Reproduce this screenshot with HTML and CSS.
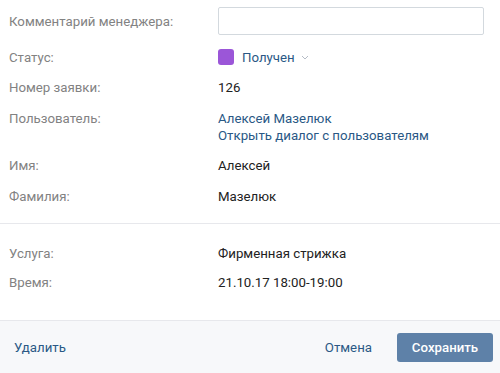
FILE: index.html
```html
<!DOCTYPE html>
<html lang="ru">
<head>
    <meta charset="UTF-8">
    <meta name="viewport" content="width=device-width, initial-scale=1.0">
    <title>Заявка</title>
    <link rel="stylesheet" href="styles.css">
</head>
<body>
    <!-- основные данные заявки -->
    <div class="section section-main">
        <div class="row row-input">
            <div class="label">Комментарий менеджера:</div>
            <div class="value"><input type="text" class="comment"></div>
        </div>
        <div class="row">
            <div class="label">Статус:</div>
            <div class="value status">
                <span class="status-color"></span>
                <span class="link">Получен</span>
                <svg class="caret" width="8" height="5" viewBox="0 0 8 5"><path d="M1 1l3 3 3-3" fill="none" stroke="#b5bcc6" stroke-width="1"/></svg>
            </div>
        </div>
        <div class="row">
            <div class="label">Номер заявки:</div>
            <div class="value">126</div>
        </div>
        <div class="row">
            <div class="label">Пользователь:</div>
            <div class="value">
                <div class="link">Алексей Мазелюк</div>
                <div class="link">Открыть диалог с пользователям</div>
            </div>
        </div>
        <div class="row">
            <div class="label">Имя:</div>
            <div class="value">Алексей</div>
        </div>
        <div class="row">
            <div class="label">Фамилия:</div>
            <div class="value">Мазелюк</div>
        </div>
    </div>

    <!-- услуга -->
    <div class="section section-service">
        <div class="row">
            <div class="label">Услуга:</div>
            <div class="value">Фирменная стрижка</div>
        </div>
        <div class="row">
            <div class="label">Время:</div>
            <div class="value">21.10.17 18:00-19:00</div>
        </div>
    </div>

    <!-- кнопки -->
    <div class="footer">
        <span class="link">Удалить</span>
        <div class="actions">
            <span class="link">Отмена</span>
            <button class="save">Сохранить</button>
        </div>
    </div>
</body>
</html>
```

FILE: styles.css
```css
body {
    margin: 0;
    font-family: Roboto, "Liberation Sans", sans-serif;
    font-size: 13.25px;
    line-height: 17px;
    color: #222;
    background: #fff;
    width: 500px;
    height: 373px;
    overflow: hidden;
}

.section {
    display: flex;
    flex-direction: column;
    gap: 13.5px;
    padding: 0 16px 0 9px;
}

.section-main {
    padding-top: 7px;
    padding-bottom: 18.5px;
    border-bottom: 1px solid #e7e8ec;
}

.section-service {
    gap: 12px;
    padding-top: 21px;
    padding-bottom: 28.5px;
}

.row {
    display: grid;
    grid-template-columns: 209px 1fr;
}

.row-input {
    align-items: center;
}

.label {
    color: #828282;
}

.link {
    color: #2a5885;
}

.comment {
    display: block;
    box-sizing: border-box;
    width: 266px;
    height: 28px;
    border: 1px solid #d3d9de;
    border-radius: 2px;
    margin: 0;
}

.status {
    display: flex;
    align-items: center;
}

.status-color {
    width: 16px;
    height: 16px;
    border-radius: 3px;
    background: #9b56d8;
    margin-right: 8px;
}

.caret {
    margin-left: 6px;
}

.footer {
    display: flex;
    justify-content: space-between;
    align-items: center;
    height: 53px;
    padding: 0 7px 0 14px;
    background: #f7f8fa;
    border-top: 1px solid #e7e8ec;
}

.actions {
    display: flex;
    align-items: center;
    gap: 25px;
}

.save {
    width: 96px;
    height: 29px;
    border: none;
    border-radius: 3px;
    background: #5e81a8;
    color: #fff;
    font-family: inherit;
    font-size: 13.25px;
    font-weight: 500;
    padding: 0;
}
```
